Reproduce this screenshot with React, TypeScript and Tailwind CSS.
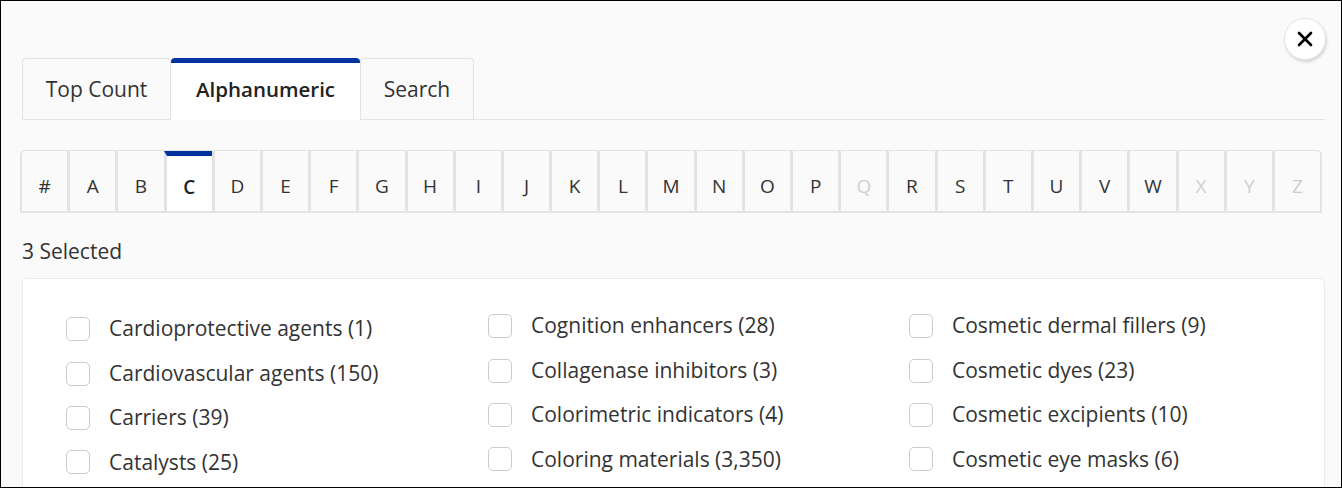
import { X } from 'lucide-react';

const letters = ['#', 'A', 'B', 'C', 'D', 'E', 'F', 'G', 'H', 'I', 'J', 'K', 'L', 'M', 'N', 'O', 'P', 'Q', 'R', 'S', 'T', 'U', 'V', 'W', 'X', 'Y', 'Z'];
const disabled = ['Q', 'X', 'Y', 'Z'];

const columns = [
  ['Cardioprotective agents (1)', 'Cardiovascular agents (150)', 'Carriers (39)', 'Catalysts (25)'],
  ['Cognition enhancers (28)', 'Collagenase inhibitors (3)', 'Colorimetric indicators (4)', 'Coloring materials (3,350)'],
  ['Cosmetic dermal fillers (9)', 'Cosmetic dyes (23)', 'Cosmetic excipients (10)', 'Cosmetic eye masks (6)'],
];

export default function App() {
  return (
    <div className="relative h-[488px] w-full overflow-hidden border border-black bg-[#fafafa] px-[21px] pt-[57px] font-['Open_Sans',sans-serif] text-[#333]">
      {/* close */}
      <button className="absolute left-[1283px] top-[17px] flex h-[42px] w-[42px] items-center justify-center rounded-full border border-[#e6e6e6] bg-white shadow-[1px_2px_3px_rgba(0,0,0,0.15)]">
        <X className="h-6 w-6 text-black" strokeWidth={2.6} />
      </button>

      {/* tabs */}
      <div className="flex h-[62px] w-[1303px] items-end border-b border-[#e3e3e3]">
        <div className="-mb-px flex h-[62px] w-[149px] items-center justify-center rounded-t-[4px] border border-b-0 border-[#e3e3e3] text-[21px]">
          Top Count
        </div>
        <div className="-mb-px flex h-[62px] w-[189px] items-center justify-center rounded-t-[4px] border-t-[5px] border-[#0033a0] bg-white pb-[4px] text-[20.5px] font-semibold text-[#222]">
          Alphanumeric
        </div>
        <div className="-mb-px flex h-[62px] w-[114px] items-center justify-center rounded-t-[4px] border border-b-0 border-[#e3e3e3] text-[21px]">
          Search
        </div>
      </div>

      {/* letters */}
      <div className="-ml-[2px] mt-[30px] flex h-[63px] w-[1302px] overflow-hidden rounded-t-[5px] border-l-[2px] border-r-[2px] border-t border-b-[2px] border-[#e3e3e3]">
        {letters.map((l, i) => {
          const active = l === 'C';
          const off = disabled.includes(l);
          return (
            <div
              key={l}
              className={`flex flex-1 items-center justify-center text-[19px] ${i > 0 ? 'border-l-[3px] border-[#e3e3e3]' : ''} ${
                active ? 'border-t-[5px] border-t-[#0033a0] bg-white pt-[7px] font-semibold text-[#222]' : 'pt-[11px]'
              } ${off ? 'text-[#cfcfcf]' : ''}`}
            >
              {l}
            </div>
          );
        })}
      </div>

      <div className="mt-[25px] text-[21px] leading-[26px]">3 Selected</div>

      {/* list */}
      <div className="mt-[14px] h-[260px] w-[1303px] rounded-[5px] border border-[#ececec] bg-white pl-[43px] shadow-[0_1px_2px_rgba(0,0,0,0.04)]">
        <div className="grid grid-cols-[422px_421px_421px] pt-[25px]">
          {columns.map((col, ci) => (
            <div key={ci} className={`flex flex-col ${ci === 0 ? 'pt-[3px]' : ''}`}>
              {col.map((item) => (
                <label key={item} className="flex h-[44.4px] items-center gap-[19px] text-[21px]">
                  <span className="h-6 w-6 shrink-0 rounded-[5px] border border-[#cccccc] bg-white" />
                  <span>{item}</span>
                </label>
              ))}
            </div>
          ))}
        </div>
      </div>
    </div>
  );
}
